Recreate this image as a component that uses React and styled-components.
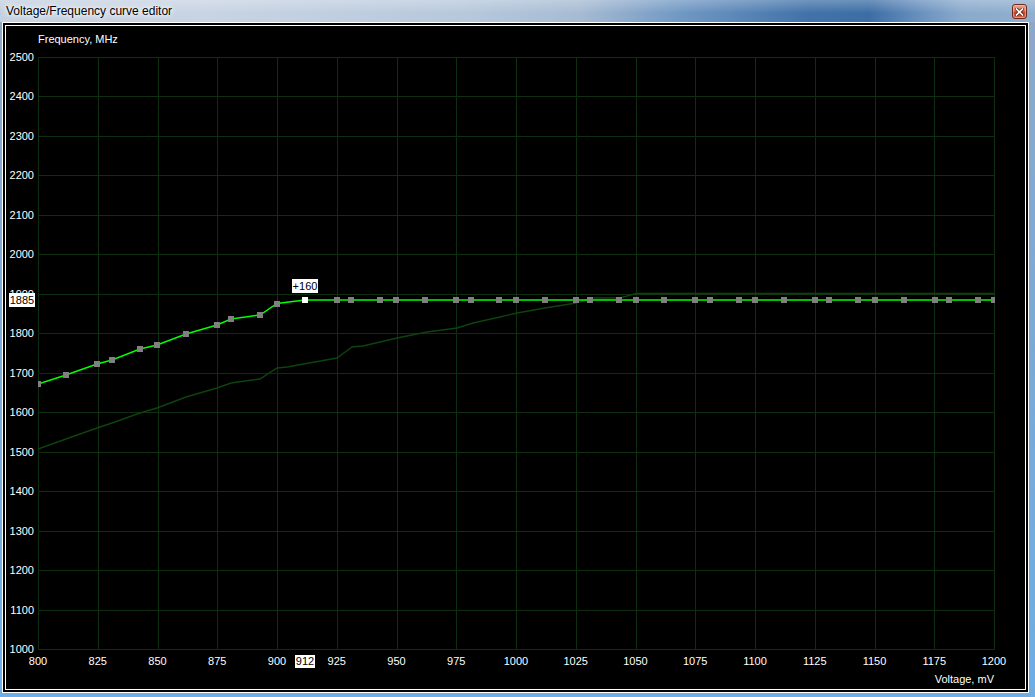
import React from 'react';
import styled, { createGlobalStyle } from 'styled-components';

const GlobalStyle = createGlobalStyle`
  html, body {
    margin: 0;
    padding: 0;
    background: #000;
    overflow: hidden;
  }
`;

const Window = styled.div`
  display: flex;
  flex-direction: column;
  width: 1035px;
  height: 697px;
  background: linear-gradient(180deg, #8ea8c5 0%, #7ea9d3 45%, #6caee5 100%);
  box-sizing: border-box;
  padding: 0 6px 4px 2px;
`;

const TitleBar = styled.div`
  display: flex;
  align-items: flex-start;
  justify-content: space-between;
  height: 22px;
  flex-shrink: 0;
  margin: 0 -6px 0 -2px;
  padding: 0 8px 0 6px;
  background:
    linear-gradient(180deg, rgba(255, 255, 255, 0.25) 0%, rgba(255, 255, 255, 0) 60%),
    linear-gradient(90deg, #c3d0e0 0%, #c8d4e3 20%, #b7c8dc 45%, #a6bbd3 56%, #6f97c3 66%, #4172a8 78%, #3c6ea5 84%, #6a91bf 89%, #8aaacc 93%, #90afcf 100%);
`;

const Title = styled.span`
  font-family: 'Liberation Sans', Arial, sans-serif;
  font-size: 12px;
  line-height: 22px;
  color: #000;
  text-shadow: 0 0 6px #fff, 0 0 10px #fff, 0 0 3px #fff;
`;

const CloseButton = styled.div`
  display: flex;
  align-items: center;
  justify-content: center;
  width: 15px;
  height: 15px;
  margin-top: 4px;
  box-sizing: border-box;
  border: 1px solid #6e2a1c;
  border-radius: 3px;
  background: linear-gradient(180deg, #e9a58f 0%, #d97a5f 45%, #c4442a 55%, #d2654a 100%);
  box-shadow: inset 0 0 0 1px rgba(255, 210, 190, 0.45);
`;

const ClientFrame = styled.div`
  flex: 1;
  display: flex;
  border: 1px solid #fff;
  padding: 2px;
  background: #000;
`;

const ClientInner = styled.div`
  flex: 1;
  display: flex;
  border: 1px solid #fff;
  background: #000;
`;

const Chart = styled.svg`
  display: block;
  font-family: 'Liberation Sans', Arial, sans-serif;
  font-size: 11px;
`;

const AxisText = styled.text`
  fill: ${(p) => (p.$dark ? '#000' : '#fff')};
`;

const GridLine = styled.line`
  stroke: #0f2e0f;
  stroke-width: 1;
  shape-rendering: crispEdges;
`;

const PLOT = { left: 38, right: 994, top: 57, bottom: 649 };
const vx = (mv) => PLOT.left + ((mv - 800) * (PLOT.right - PLOT.left)) / 400;
const fy = (mhz) => PLOT.bottom - ((mhz - 1000) * (PLOT.bottom - PLOT.top)) / 1500;
const px = (v) => Math.round(v) + 0.5;

// curve points, in screen pixels
const pointX = [
  38, 66, 97, 112, 140, 157, 186, 217, 231, 260, 277, 305, 337, 351, 380, 396, 425,
  456, 471, 499, 516, 545, 576, 590, 619, 636, 664, 695, 710, 739, 755, 784, 815,
  829, 858, 875, 904, 935, 949, 978, 994,
];
const pointY = [384, 375, 364, 360, 349, 345, 334, 325, 319, 315, 303.5];
const SELECTED = 11;

const curve = pointX.map((x, i) => [x, i < pointY.length ? pointY[i] : 300]);

const baseCurve = [
  [38, 449], [66, 439], [97, 428], [112, 423], [140, 413], [157, 408], [186, 397],
  [217, 388], [231, 383], [260, 379], [277, 368], [287, 367], [337, 358], [352, 347],
  [363, 346], [397, 338], [427, 332], [457, 328], [473, 323], [500, 317], [517, 313],
  [545, 308], [576, 303], [593, 298], [620, 298], [636, 293.5], [994, 293.5],
];

const toPoints = (pts) => pts.map(([x, y]) => `${x},${y}`).join(' ');

const freqs = Array.from({ length: 16 }, (_, i) => 1000 + i * 100);
const volts = Array.from({ length: 17 }, (_, i) => 800 + i * 25);

const CloseIcon = () => (
  <svg width="9" height="8" viewBox="0 0 9 8">
    <path d="M1.5 1 L7.5 7 M7.5 1 L1.5 7" stroke="#5a1f14" strokeWidth="3.2" strokeLinecap="square" />
    <path d="M1.5 1 L7.5 7 M7.5 1 L1.5 7" stroke="#fff" strokeWidth="1.7" strokeLinecap="square" />
  </svg>
);

const CurveChart = () => (
  <Chart width="1019" height="663" viewBox="6 26 1019 663">
    <defs>
      <clipPath id="plot">
        <rect x={PLOT.left} y={PLOT.top} width={PLOT.right - PLOT.left + 1} height={PLOT.bottom - PLOT.top + 1} />
      </clipPath>
    </defs>

    {volts.map((v) => (
      <GridLine key={`v${v}`} x1={px(vx(v))} x2={px(vx(v))} y1={PLOT.top} y2={PLOT.bottom + 1} />
    ))}
    {freqs.map((f) => (
      <GridLine key={`f${f}`} x1={PLOT.left} x2={PLOT.right + 1} y1={px(fy(f))} y2={px(fy(f))} />
    ))}

    <AxisText x={38} y={43}>Frequency, MHz</AxisText>
    {freqs.map((f) => (
      <AxisText key={`fl${f}`} x={34} y={Math.round(fy(f)) + 4} textAnchor="end">
        {f}
      </AxisText>
    ))}
    {volts.map((v) => (
      <AxisText key={`vl${v}`} x={vx(v)} y={665} textAnchor="middle">
        {v}
      </AxisText>
    ))}
    <AxisText x={994} y={683} textAnchor="end">Voltage, mV</AxisText>

    <g clipPath="url(#plot)">
      <polyline points={toPoints(baseCurve)} fill="none" stroke="#0d430d" strokeWidth="1.4" />
      <polyline points={toPoints(curve)} fill="none" stroke="#00ff00" strokeWidth="1.5" />
      {curve.map(([x, y], i) => (
        <rect
          key={i}
          x={x - 3}
          y={Math.round(y) - 3}
          width="6"
          height="6"
          fill={i === SELECTED ? '#fff' : '#808080'}
          shapeRendering="crispEdges"
        />
      ))}
    </g>

    <rect x={9} y={293} width={26} height={14} fill="#fff" shapeRendering="crispEdges" />
    <AxisText $dark x={22} y={304} textAnchor="middle">1885</AxisText>

    <rect x={295} y={655} width={20} height={13} fill="#fff" shapeRendering="crispEdges" />
    <AxisText $dark x={305} y={665} textAnchor="middle">912</AxisText>

    <rect x={292} y={279} width={26} height={14} fill="#fff" shapeRendering="crispEdges" />
    <AxisText $dark x={305} y={290} textAnchor="middle">+160</AxisText>
  </Chart>
);

export default function App() {
  return (
    <>
      <GlobalStyle />
      <Window>
        <TitleBar>
          <Title>Voltage/Frequency curve editor</Title>
          <CloseButton>
            <CloseIcon />
          </CloseButton>
        </TitleBar>
        <ClientFrame>
          <ClientInner>
            <CurveChart />
          </ClientInner>
        </ClientFrame>
      </Window>
    </>
  );
}
